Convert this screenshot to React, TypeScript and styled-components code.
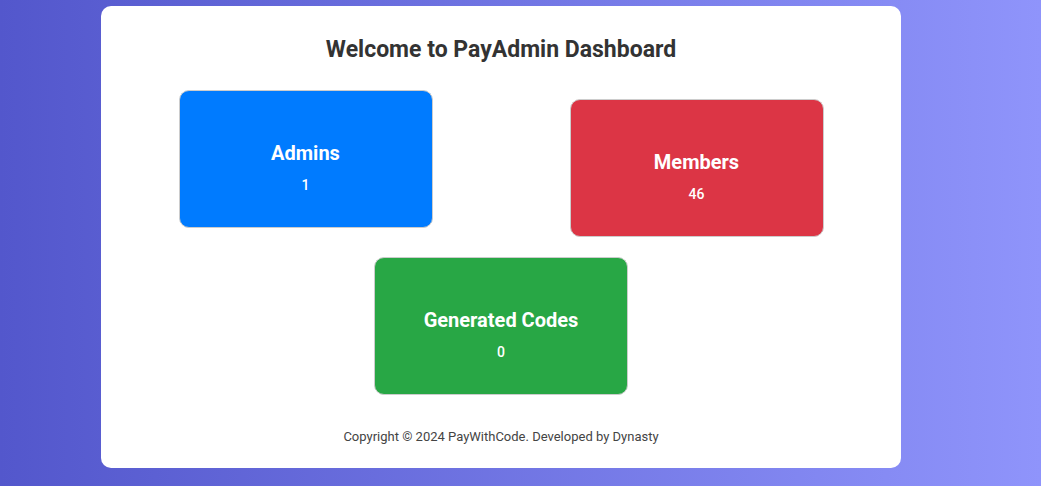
import React from "react";
import styled, { createGlobalStyle } from "styled-components";

const GlobalStyle = createGlobalStyle`
  html, body { height: 100%; }
  body {
    margin: 0;
    font-family: Roboto, "Liberation Sans", Arial, sans-serif;
    background: linear-gradient(to right, #5357cc, #8f94fb);
  }
  * { box-sizing: border-box; }
`;

const Page = styled.div`
  padding: 6px 39px 0 0;
`;

const Container = styled.div`
  width: 800px;
  margin: 0 auto;
  background: #ffffff;
  border-radius: 10px;
  padding: 20px 9px 23px;
  text-align: center;
`;

const Title = styled.h1`
  margin: 10px 0 25px;
  font-size: 23px;
  line-height: 28px;
  font-weight: 700;
  color: #333333;
`;

const Cards = styled.div`
  display: flex;
  flex-wrap: wrap;
  justify-content: space-around;
`;

const Card = styled.div<{ $bg: string; $lift?: boolean }>`
  width: 254px;
  height: 138px;
  margin: 10px;
  padding-top: 16px;
  display: flex;
  flex-direction: column;
  align-items: center;
  justify-content: center;
  background: ${(p) => p.$bg};
  border: 1px solid #cccccc;
  border-radius: 10px;
  color: #ffffff;
  transform: ${(p) => (p.$lift ? "translateY(-9px)" : "none")};
`;

const CardTitle = styled.h3`
  margin: 0 0 12px;
  font-size: 20px;
  line-height: 24px;
  font-weight: 700;
`;

const CardValue = styled.p`
  margin: 0;
  font-size: 14px;
  line-height: 16px;
  font-weight: 500;
`;

const Footer = styled.footer`
  margin-top: 24px;
  font-size: 13px;
  line-height: 16px;
  color: #444444;
`;

const stats = [
  { label: "Admins", value: "1", bg: "#007bff", lift: true },
  { label: "Members", value: "46", bg: "#dc3545" },
  { label: "Generated Codes", value: "0", bg: "#28a745" },
];

export default function App() {
  return (
    <>
      <GlobalStyle />
      <Page>
        <Container>
          <Title>Welcome to PayAdmin Dashboard</Title>
          <Cards>
            {stats.map((s) => (
              <Card key={s.label} $bg={s.bg} $lift={s.lift}>
                <CardTitle>{s.label}</CardTitle>
                <CardValue>{s.value}</CardValue>
              </Card>
            ))}
          </Cards>
          <Footer>Copyright © 2024 PayWithCode. Developed by Dynasty</Footer>
        </Container>
      </Page>
    </>
  );
}
